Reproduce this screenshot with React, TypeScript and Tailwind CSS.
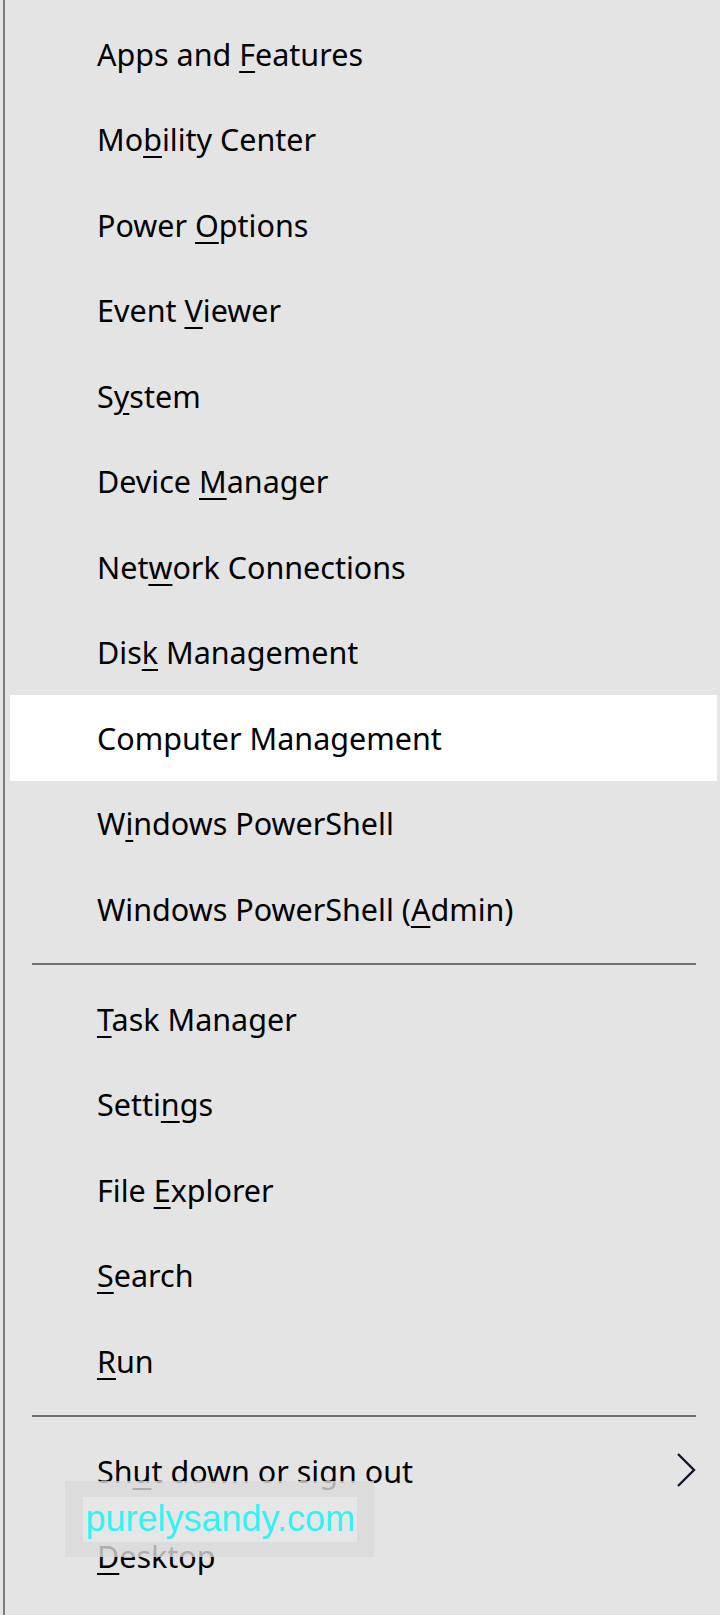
import React from "react";

type Item = { label: string; key?: number; highlight?: boolean; submenu?: boolean };

// key = index of the access-key letter that gets underlined
const GROUP_ONE: Item[] = [
  { label: "Apps and Features", key: 9 },
  { label: "Mobility Center", key: 2 },
  { label: "Power Options", key: 6 },
  { label: "Event Viewer", key: 6 },
  { label: "System", key: 1 },
  { label: "Device Manager", key: 7 },
  { label: "Network Connections", key: 3 },
  { label: "Disk Management", key: 3 },
  { label: "Computer Management", highlight: true },
  { label: "Windows PowerShell", key: 1 },
  { label: "Windows PowerShell (Admin)", key: 20 },
];

const GROUP_TWO: Item[] = [
  { label: "Task Manager", key: 0 },
  { label: "Settings", key: 5 },
  { label: "File Explorer", key: 5 },
  { label: "Search", key: 0 },
  { label: "Run", key: 0 },
];

const GROUP_THREE: Item[] = [
  { label: "Shut down or sign out", key: 2, submenu: true },
  { label: "Desktop", key: 0 },
];

function Label({ text, k }: { text: string; k?: number }) {
  if (k === undefined) return <span>{text}</span>;
  return (
    <span>
      {text.slice(0, k)}
      <span className="underline decoration-[2px] underline-offset-[5px]">{text[k]}</span>
      {text.slice(k + 1)}
    </span>
  );
}

function MenuRow({ item }: { item: Item }) {
  return (
    <div
      className={`flex items-center h-[85.5px] pl-[87px] pr-[20px] ${
        item.highlight ? "bg-white" : ""
      }`}
    >
      <span className="flex-1 text-[30.5px] text-black leading-none">
        <Label text={item.label} k={item.key} />
      </span>
      {item.submenu && (
        <svg width="22" height="36" viewBox="0 0 22 36" fill="none" className="mb-[2px]">
          <polyline points="3,2 19,18 3,34" stroke="#101828" strokeWidth="2.4" strokeLinejoin="miter" />
        </svg>
      )}
    </div>
  );
}

function Separator() {
  return (
    <div className="flex items-center h-[24.5px] pl-[22px] pr-[21px]">
      <div className="h-[2px] flex-1 bg-[#707070]" />
    </div>
  );
}

export default function App() {
  return (
    <div
      className="relative w-[720px] h-[1615px] bg-[#e4e4e4] overflow-hidden"
      style={{ fontFamily: '"Noto Sans", "Open Sans", sans-serif' }}
    >
      {/* left window edge */}
      <div className="absolute left-[3px] top-0 bottom-0 w-[2px] bg-[#7c7c7c]" />

      <div className="flex flex-col pt-[11px] pl-[10px] pr-[3px]">
        {GROUP_ONE.map((it) => (
          <MenuRow key={it.label} item={it} />
        ))}
        <Separator />
        {GROUP_TWO.map((it) => (
          <MenuRow key={it.label} item={it} />
        ))}
        <Separator />
        {GROUP_THREE.map((it) => (
          <MenuRow key={it.label} item={it} />
        ))}
      </div>

      {/* watermark */}
      <div className="absolute left-[65px] top-[1481px] w-[309px] h-[76px] bg-[#d9d9d9]/80 flex items-center justify-center">
        <div
          className="w-[274px] h-[45px] bg-[#e6e6e6] flex items-center pl-[3px] text-[36px] leading-none text-[#33f2f2]"
          style={{ fontFamily: '"Liberation Sans", Arial, sans-serif' }}
        >
          purelysandy.com
        </div>
      </div>
    </div>
  );
}
